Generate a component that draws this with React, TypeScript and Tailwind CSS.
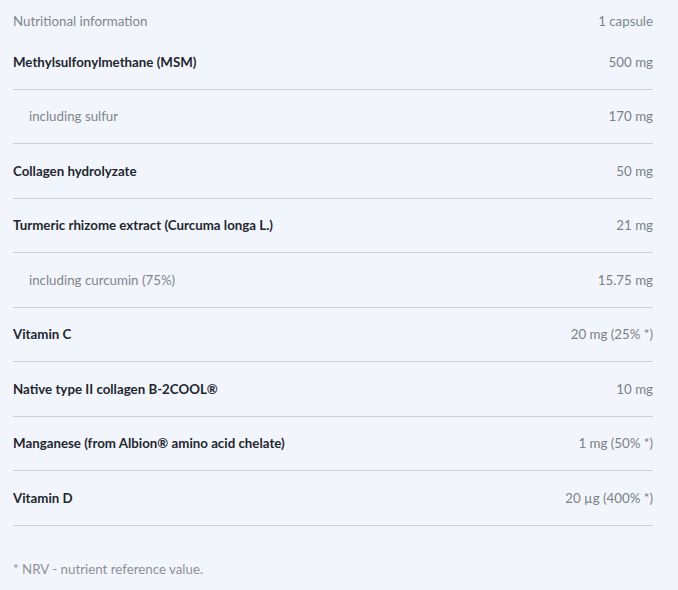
const ROWS = [
    { name: 'Methylsulfonylmethane (MSM)', value: '500 mg' },
    { name: 'including sulfur', value: '170 mg', sub: true },
    { name: 'Collagen hydrolyzate', value: '50 mg' },
    { name: 'Turmeric rhizome extract (Curcuma longa L.)', value: '21 mg' },
    { name: 'including curcumin (75%)', value: '15.75 mg', sub: true },
    { name: 'Vitamin C', value: '20 mg (25% *)' },
    { name: 'Native type II collagen B-2COOL®', value: '10 mg' },
    { name: 'Manganese (from Albion® amino acid chelate)', value: '1 mg (50% *)' },
    { name: 'Vitamin D', value: '20 µg (400% *)' },
]

export default function App() {
    return (
        <div className="min-h-[590px] w-[678px] bg-[#f2f6fc] pl-[13px] pr-[25px] text-[13.3px] font-['Lato','Liberation_Sans',sans-serif]">
            {/* Header */}
            <div className="flex justify-between pt-3 pb-[5px] leading-[18px] text-[#80858c]">
                <span>Nutritional information</span>
                <span>1 capsule</span>
            </div>

            {ROWS.map(r => (
                <div
                    key={r.name}
                    className="flex h-[54.5px] items-center justify-between border-b border-[#cdd1d7] leading-[18px]"
                >
                    <span className={r.sub ? 'pl-4 text-[#80858c]' : 'font-bold text-[#1e2630]'}>
                        {r.name}
                    </span>
                    <span className="text-[#7a7f87]">{r.value}</span>
                </div>
            ))}

            <p className="pt-[34px] leading-[18px] text-[#8c9198]">* NRV - nutrient reference value.</p>
        </div>
    )
}
